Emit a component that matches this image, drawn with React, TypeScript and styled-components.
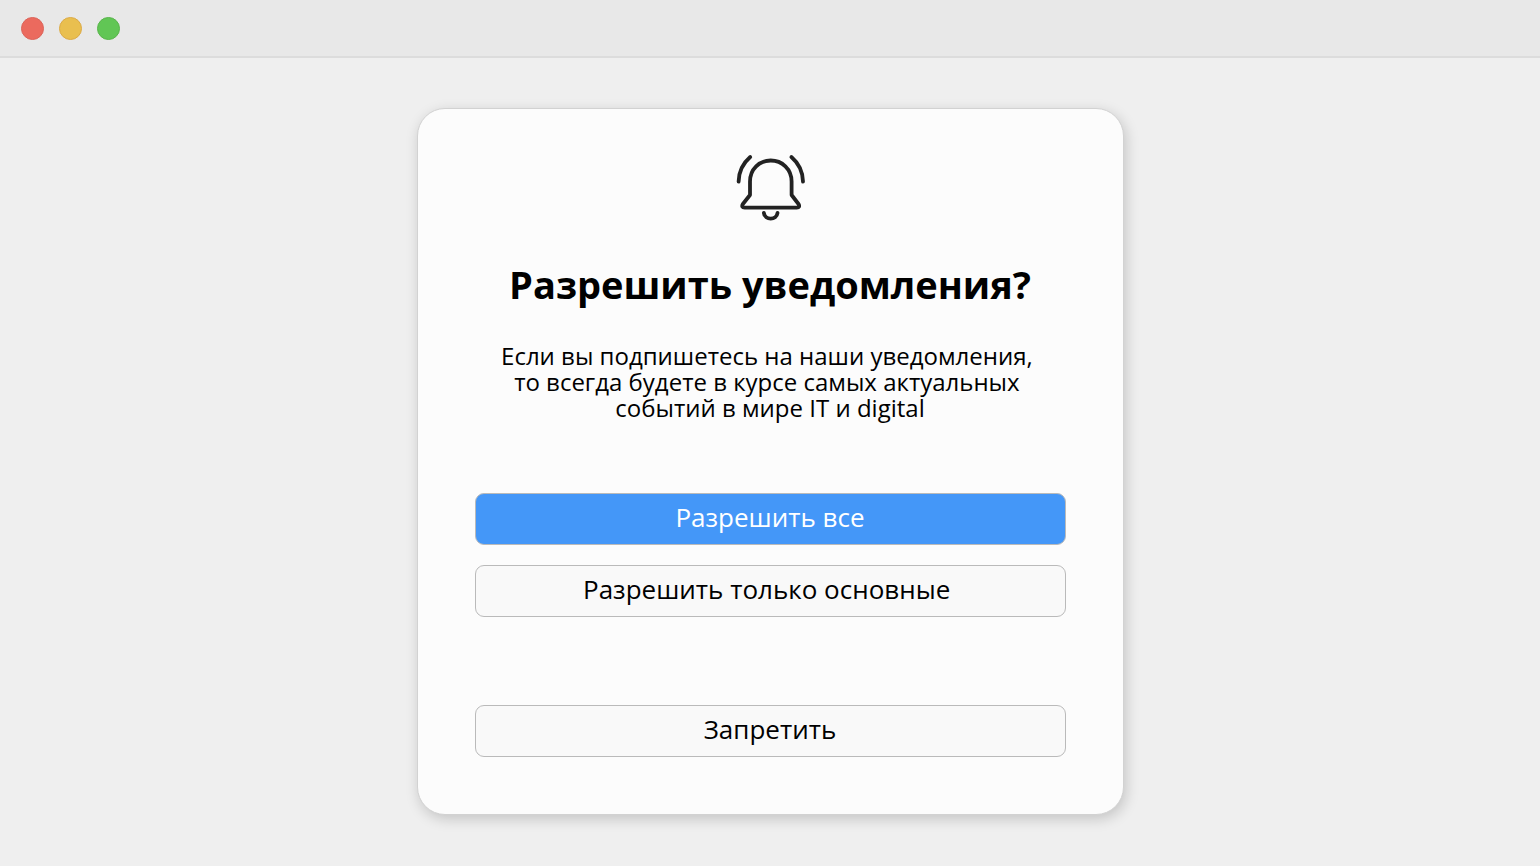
import React from "react";
import styled, { createGlobalStyle } from "styled-components";

const GlobalStyle = createGlobalStyle`
  * {
    box-sizing: border-box;
  }

  body {
    margin: 0;
    background: #efefef;
    color: #000;
    font-family: "Open Sans", "Noto Sans", sans-serif;
  }
`;

const Page = styled.div`
  display: flex;
  flex-direction: column;
  min-height: 100vh;
`;

const TitleBar = styled.header`
  display: flex;
  align-items: center;
  gap: 15px;
  height: 58px;
  padding: 1px 21px 0;
  background: #e8e8e8;
  border-bottom: 2px solid #dcdcdc;
`;

const WindowButton = styled.button<{ $fill: string; $edge: string }>`
  width: 23px;
  height: 23px;
  padding: 0;
  border: 1px solid ${(p) => p.$edge};
  border-radius: 50%;
  background: ${(p) => p.$fill};
`;

const Content = styled.main`
  display: flex;
  justify-content: center;
  padding: 50px 20px;
`;

const Card = styled.section`
  display: flex;
  flex-direction: column;
  align-items: center;
  width: 100%;
  max-width: 707px;
  padding: 44px 57px 57px;
  background: #fcfcfc;
  border: 1px solid #d2d2d2;
  border-radius: 28px;
  box-shadow: 2px 4px 14px rgba(0, 0, 0, 0.18);
`;

const Title = styled.h1`
  margin: 35px 0 0;
  font-size: 38px;
  line-height: 56px;
  font-weight: 700;
  text-align: center;
`;

const Description = styled.p`
  margin: 31px 0 0;
  font-size: 24px;
  line-height: 26px;
  text-align: center;
  white-space: break-spaces;
`;

const Actions = styled.div`
  display: flex;
  flex-direction: column;
  align-items: stretch;
  gap: 88px;
  width: 100%;
  margin-top: 72px;
`;

const AllowGroup = styled.div`
  display: flex;
  flex-direction: column;
  gap: 20px;
`;

const ActionButton = styled.button<{ $primary?: boolean }>`
  min-height: 52px;
  padding: 0 16px 4px;
  border: 1px solid #bababa;
  border-radius: 9px;
  background: ${(p) => (p.$primary ? "#4497f8" : "#f9f9f9")};
  color: ${(p) => (p.$primary ? "#fff" : "#000")};
  font-family: inherit;
  font-size: 26px;
  line-height: 36px;
  white-space: break-spaces;
`;

const BellIcon = () => (
  <svg
    width="71"
    height="68"
    viewBox="0 0 71 68"
    fill="none"
    stroke="#222"
    strokeWidth="3.8"
    strokeLinecap="round"
    strokeLinejoin="round"
    aria-hidden="true"
  >
    <path d="M15 42V28.600C15 16 24.400 7.500 35.700 7.500S56.600 16 56.600 28.600V42L63.500 51Q65.500 54.600 61.700 54.600H9.700Q5.900 54.600 7.900 51Z" />
    <path d="M28.900 60C29.900 67.600 41.500 67.600 42.500 60" />
    <path d="M15.200 4C8 10.200 3.800 19.200 3.600 28.600" />
    <path d="M56.400 4C63.600 10.200 67.800 19.200 68 28.600" />
  </svg>
);

const windowButtons = [
  { label: "Закрыть", fill: "#eb6a5e", edge: "#dc6459" },
  { label: "Свернуть", fill: "#e9bf4f", edge: "#dcaa46" },
  { label: "Развернуть", fill: "#61c655", edge: "#58b54a" },
];

export default function App() {
  return (
    <Page>
      <GlobalStyle />
      <TitleBar>
        {windowButtons.map((b) => (
          <WindowButton key={b.label} type="button" aria-label={b.label} $fill={b.fill} $edge={b.edge} />
        ))}
      </TitleBar>
      <Content>
        <Card aria-labelledby="notify-title">
          <BellIcon />
          <Title id="notify-title">Разрешить уведомления?</Title>
          <Description>
            {"Если вы подпишетесь на наши уведомления, \nто всегда будете в курсе самых актуальных \nсобытий в мире IT и digital"}
          </Description>
          <Actions>
            <AllowGroup>
              <ActionButton type="button" $primary>
                Разрешить все
              </ActionButton>
              <ActionButton type="button">{"Разрешить только основные "}</ActionButton>
            </AllowGroup>
            <ActionButton type="button">Запретить</ActionButton>
          </Actions>
        </Card>
      </Content>
    </Page>
  );
}
